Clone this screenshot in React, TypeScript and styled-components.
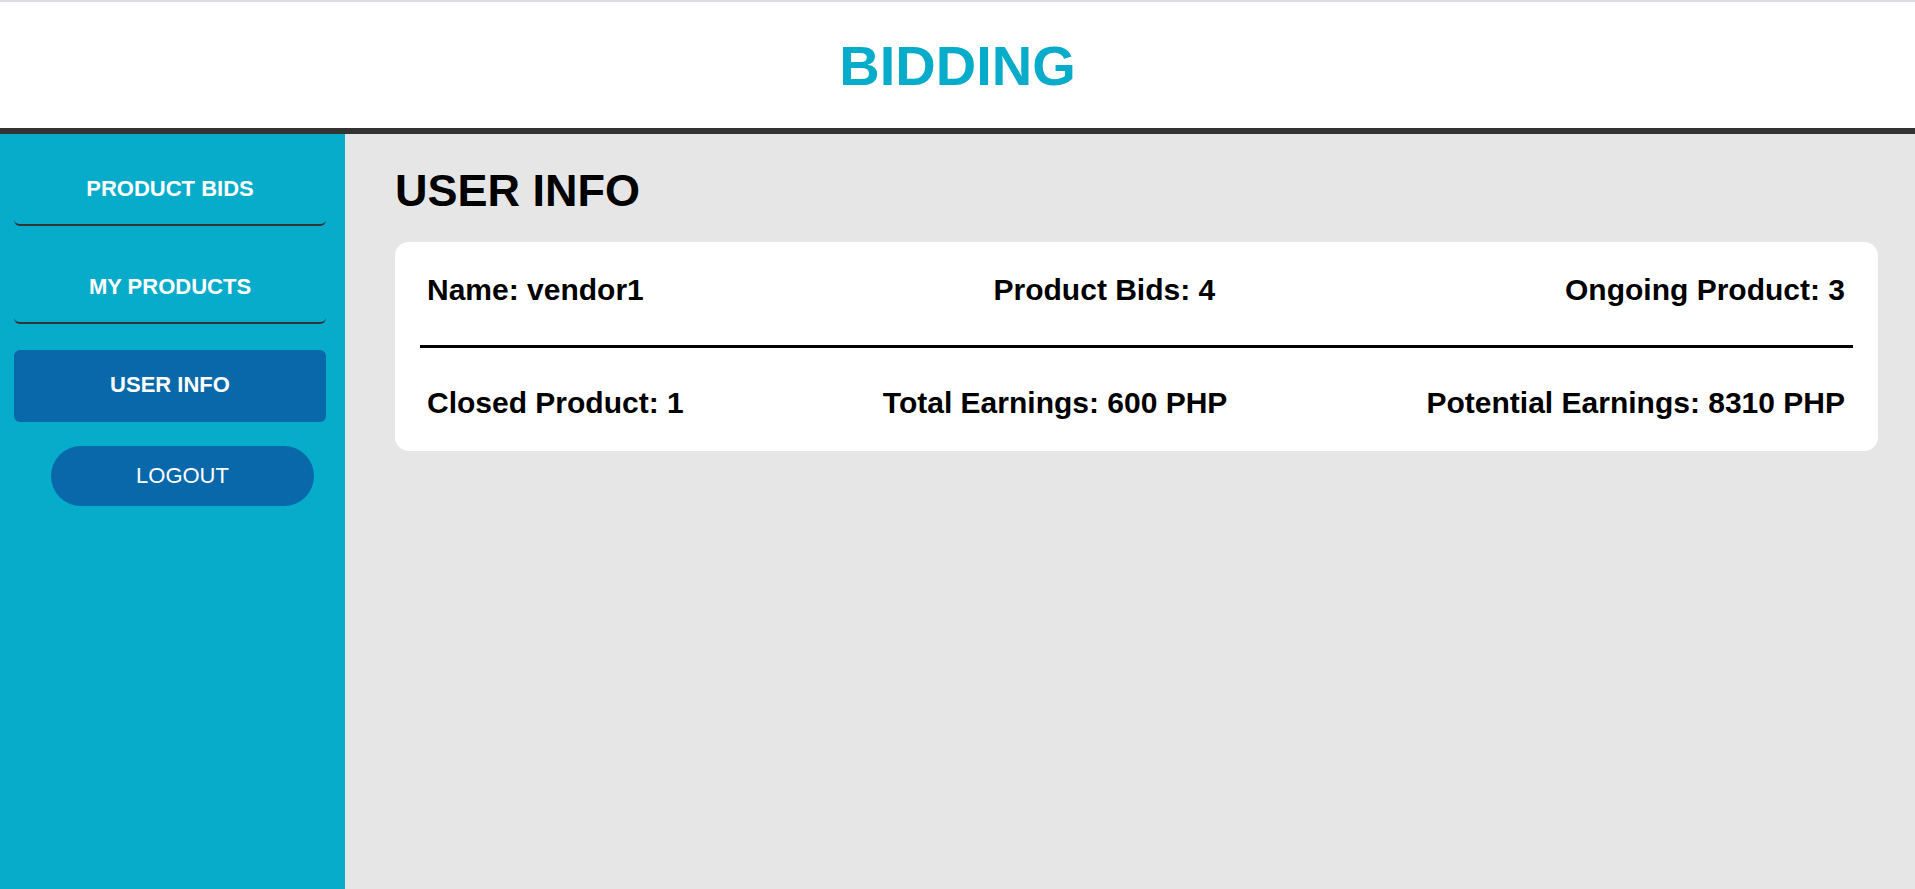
import React from "react";
import styled, { createGlobalStyle } from "styled-components";

const GlobalStyle = createGlobalStyle`
  html, body {
    margin: 0;
    padding: 0;
    height: 100%;
  }
  body {
    font-family: "Liberation Sans", Arial, sans-serif;
    background: #ffffff;
  }
  #root {
    min-height: 100vh;
  }
  * { box-sizing: border-box; }
`;

const Page = styled.div`
  display: flex;
  flex-direction: column;
  min-height: 100vh;
`;

const Header = styled.header`
  height: 134px;
  flex: 0 0 auto;
  display: flex;
  align-items: center;
  justify-content: center;
  background: #ffffff;
  border-top: 2px solid #dcdce1;
  border-bottom: 6px solid #333333;
`;

const Brand = styled.h1`
  margin: 0;
  font-size: 56px;
  font-weight: 700;
  color: #07acca;
  line-height: normal;
  padding-top: 1px;
`;

const Body = styled.div`
  flex: 1;
  display: flex;
  min-height: 0;
`;

const Sidebar = styled.nav`
  width: 345px;
  flex: 0 0 345px;
  background: #07acca;
  display: flex;
  flex-direction: column;
  padding: 20px 19px 0 14px;
`;

const NavItem = styled.a<{ $active?: boolean }>`
  height: 72px;
  margin-bottom: 26px;
  display: flex;
  align-items: center;
  justify-content: center;
  color: #ffffff;
  font-size: 22px;
  font-weight: 700;
  text-decoration: none;
  border-radius: 6px;
  border-bottom: 2px solid ${(p) => (p.$active ? "transparent" : "#333333")};
  background: ${(p) => (p.$active ? "#0968a9" : "transparent")};
  cursor: pointer;
`;

const LogoutButton = styled.button`
  margin: -2px 0 0 37px;
  width: 263px;
  height: 60px;
  border: none;
  border-radius: 30px;
  background: #0968a9;
  color: #ffffff;
  font-family: "Liberation Sans", Arial, sans-serif;
  font-size: 22px;
  font-weight: 400;
  cursor: pointer;
`;

const Main = styled.main`
  flex: 1;
  background: #e6e6e6;
  padding: 32px 37px 0 50px;
`;

const Title = styled.h2`
  margin: 0 0 26px 0;
  font-size: 45px;
  font-weight: 700;
  color: #000000;
  line-height: 50px;
`;

const Card = styled.section`
  background: #ffffff;
  border-radius: 14px;
  padding: 25px;
`;

const InfoRow = styled.div`
  display: flex;
  justify-content: space-between;
  align-items: center;
  padding: 6px 8px 6px 7px;
`;

const InfoItem = styled.span`
  font-size: 30px;
  font-weight: 700;
  color: #000000;
  line-height: normal;
`;

const Divider = styled.hr`
  margin: 32px 0;
  height: 3px;
  border: none;
  background: #000000;
`;

export default function App() {
  return (
    <>
      <GlobalStyle />
      <Page>
        <Header>
          <Brand>BIDDING</Brand>
        </Header>
        <Body>
          <Sidebar>
            <NavItem>PRODUCT BIDS</NavItem>
            <NavItem>MY PRODUCTS</NavItem>
            <NavItem $active>USER INFO</NavItem>
            <LogoutButton>LOGOUT</LogoutButton>
          </Sidebar>
          <Main>
            <Title>USER INFO</Title>
            <Card>
              <InfoRow>
                <InfoItem>Name: vendor1</InfoItem>
                <InfoItem>Product Bids: 4</InfoItem>
                <InfoItem>Ongoing Product: 3</InfoItem>
              </InfoRow>
              <Divider />
              <InfoRow>
                <InfoItem>Closed Product: 1</InfoItem>
                <InfoItem>Total Earnings: 600 PHP</InfoItem>
                <InfoItem>Potential Earnings: 8310 PHP</InfoItem>
              </InfoRow>
            </Card>
          </Main>
        </Body>
      </Page>
    </>
  );
}
